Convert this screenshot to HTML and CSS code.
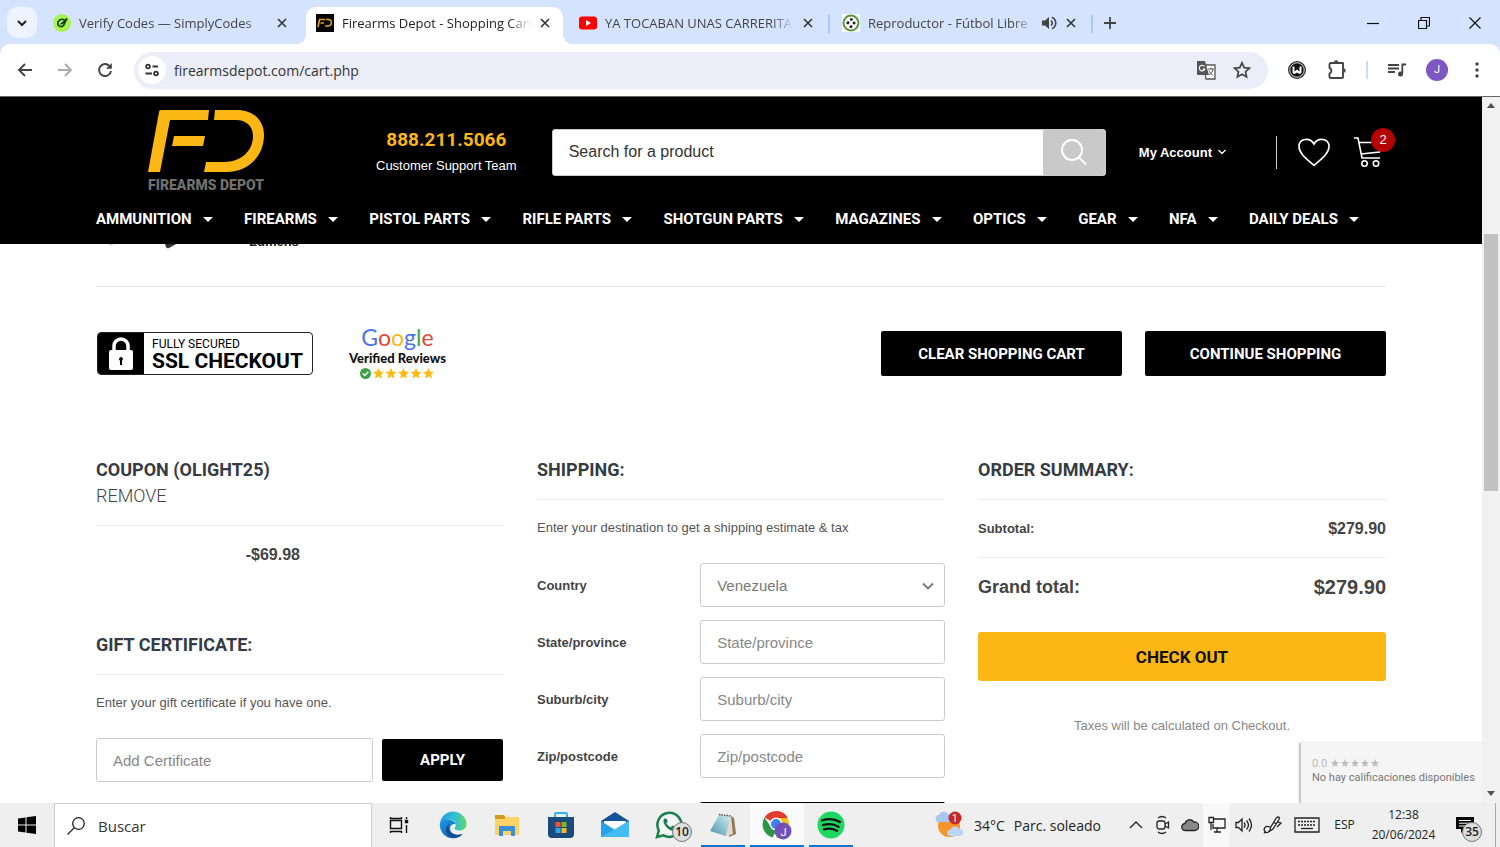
FILE: index.html
```html
<!DOCTYPE html>
<html lang="en">
<head>
    <meta charset="UTF-8">
    <meta name="viewport" content="width=device-width, initial-scale=1.0">
    <title>Firearms Depot - Shopping Cart</title>
    <link rel="stylesheet" href="styles.css">
</head>
<body>
    <!-- browser tabs -->
    <div class="tabbar">
        <button class="tab-search" aria-label="Search tabs">
            <svg width="12" height="12" viewBox="0 0 12 12"><path d="M2 4l4 4 4-4" fill="none" stroke="#222" stroke-width="2"/></svg>
        </button>
        <div class="tab">
            <svg class="favicon" viewBox="0 0 18 18"><circle cx="9" cy="9" r="9" fill="#a4f550"/><path d="M11.500 6C8 4 4.500 6.500 4.800 9.800c.4 3 4 3.700 5.700 1.700C12 9.500 11.500 8 14 4.500M7.500 9.500c1.500.5 2.500-.5 3-1.500L14 4.500" fill="none" stroke="#1d3b15" stroke-width="1.700"/></svg>
            <span class="tab-title">Verify Codes — SimplyCodes</span>
            <button class="tab-close" aria-label="Close tab"><svg width="12" height="12" viewBox="0 0 12 12"><path d="M2 2l8 8M10 2l-8 8"/></svg></button>
        </div>
        <div class="tab active">
            <svg class="favicon" viewBox="0 0 18 18"><path d="M0 0h18v18H0z" fill="#000"/><path d="M2 13L3.500 5.500H9M4.500 9H8M10 5.500h2.500c4 0 4 6.500-1 6.500H9" fill="none" stroke="#e3a21a" stroke-width="1.600"/></svg>
            <span class="tab-title">Firearms Depot - Shopping Cart</span>
            <button class="tab-close" aria-label="Close tab"><svg width="12" height="12" viewBox="0 0 12 12"><path d="M2 2l8 8M10 2l-8 8"/></svg></button>
        </div>
        <div class="tab divided">
            <svg class="favicon" viewBox="0 0 18 18"><rect y="2.500" width="18" height="13" rx="3" fill="#f00"/><path d="M7 6l5 3-5 3z" fill="#fff"/></svg>
            <span class="tab-title">YA TOCABAN UNAS CARRERITAS</span>
            <button class="tab-close" aria-label="Close tab"><svg width="12" height="12" viewBox="0 0 12 12"><path d="M2 2l8 8M10 2l-8 8"/></svg></button>
        </div>
        <div class="tab divided">
            <svg class="favicon" viewBox="0 0 18 18"><path d="M0 0h18v18H0z" fill="#fff"/><circle cx="9" cy="9" r="7.500" fill="#fff" stroke="#5b9a3c" stroke-width="2"/><path d="M8 4.500l2-.5 1 1.500-1.200 1.500L8 6.500zM4.500 8l2-1 1.200 1.800L6.500 10.500l-2-.5zM11 7.500l2.300.2.200 2-1.500 1L10.500 9.500zM7.500 12l2-1 1.200 1.500L9.500 14.200l-2-.4z" fill="#222"/></svg>
            <span class="tab-title">Reproductor - Fútbol Libre TV</span>
            <svg width="16" height="16" viewBox="0 0 16 16"><path d="M1 5.500h3L8 2v12l-4-3.500H1z" fill="#444"/><path d="M10 5.500c1.600 1.500 1.600 3.500 0 5M11 2.200c5 2.500 5 9 0 11.600" fill="none" stroke="#444" stroke-width="1.600"/></svg>
            <button class="tab-close" aria-label="Close tab"><svg width="12" height="12" viewBox="0 0 12 12"><path d="M2 2l8 8M10 2l-8 8"/></svg></button>
        </div>
        <button class="new-tab" aria-label="New tab"><svg width="12" height="12" viewBox="0 0 12 12"><path d="M6 0v12M0 6h12" stroke="#444" stroke-width="1.800"/></svg></button>
        <div class="window-controls">
            <button aria-label="Minimize"><svg width="12" height="12" viewBox="0 0 12 12"><path d="M0 6.500h12"/></svg></button>
            <button aria-label="Restore"><svg width="12" height="12" viewBox="0 0 12 12"><path d="M.5 3.500h8v8h-8zM3 3.500V.5h8.500V9H9"/></svg></button>
            <button aria-label="Close"><svg width="12" height="12" viewBox="0 0 12 12"><path d="M.5.5l11 11M11.500.5l-11 11"/></svg></button>
        </div>
    </div>

    <!-- address bar -->
    <div class="toolbar">
        <button class="tool" aria-label="Back"><svg width="16" height="16" viewBox="0 0 16 16"><path d="M15 8H2M8 2L2 8l6 6" fill="none" stroke="#444" stroke-width="1.900"/></svg></button>
        <button class="tool" aria-label="Forward"><svg width="16" height="16" viewBox="0 0 16 16"><path d="M1 8h13M8 2l6 6-6 6" fill="none" stroke="#aaa" stroke-width="1.800"/></svg></button>
        <button class="tool" aria-label="Reload"><svg width="16" height="16" viewBox="0 0 16 16"><path d="M14 9a6 6 0 1 1-1.600-5.200L14 5.500" fill="none" stroke="#444" stroke-width="1.900"/><path d="M14.800 1v5.800H9z" fill="#444"/></svg></button>
        <div class="omnibox">
            <button class="site-info" aria-label="Site information"><svg width="16" height="14" viewBox="0 0 16 14"><g fill="none" stroke="#333" stroke-width="1.800"><circle cx="4" cy="3.500" r="1.900"/><path d="M8.500 3.500H14M1.500 10.500H8"/><circle cx="12" cy="10.500" r="1.900"/></g></svg></button>
            <input class="url" type="text" aria-label="Address" value="firearmsdepot.com/cart.php">
            <button class="omni-btn" aria-label="Translate"><svg width="20" height="20" viewBox="0 0 20 20"><path d="M8 5h11v14H10z" fill="#fff" stroke="#555" stroke-width="1.300"/><path d="M1 1h8l4 14H2a1 1 0 0 1-1-1z" fill="#555"/><path d="M8.500 6.500A2.800 2.800 0 1 0 8.800 9H6.500" fill="none" stroke="#fff" stroke-width="1.200"/><path d="M12 9h6M15 7.500V9M17 9c-.5 3-2 4.500-4 6M13 10.500c1 2 2 3.500 4 4.500" fill="none" stroke="#555"/></svg></button>
            <button class="omni-btn" aria-label="Bookmark"><svg width="18" height="18" viewBox="0 0 18 18"><path d="M9 1.800l2.200 4.800 5.200.6-3.900 3.500 1.100 5.200L9 13.300l-4.600 2.600 1.100-5.200-3.900-3.500 5.200-.6z" fill="none" stroke="#444" stroke-width="1.700"/></svg></button>
        </div>
        <button class="tool ext" aria-label="Extension"><svg width="18" height="18" viewBox="0 0 18 18"><circle cx="9" cy="9" r="9" fill="#333"/><circle cx="9" cy="9" r="7.200" fill="#111" stroke="#fff" stroke-width=".8"/><path d="M4.500 5.500h2v5L9 8.500l2.500 2v-5h2v5.500c0 2-2.500 2.500-4.500.5-2 2-4.500 1.500-4.500-.5z" fill="#fff"/></svg></button>
        <button class="tool" aria-label="Extensions"><svg width="20" height="20" viewBox="0 0 20 20"><path d="M2.500 4.500q0-1.500 1.500-1.500h12v14q0 1-1 1H3.500q-1 0-1-1v-3.500c2.500-.8 2.500-4.700 0-5.500z" fill="none" stroke="#444" stroke-width="1.900" stroke-linejoin="round"/><path d="M7 2.500a2.200 2.200 0 0 1 4.400 0zM16.500 8.300a2.200 2.200 0 0 1 0 4.400z" fill="#444"/></svg></button>
        <span class="tool-sep"></span>
        <button class="tool" aria-label="Media"><svg width="18" height="16" viewBox="0 0 18 16"><path d="M0 3h11M0 6.500h11M0 10h7M14.300 11.500V2.500H18" fill="none" stroke="#444" stroke-width="1.800"/><circle cx="12.500" cy="12" r="2.500" fill="#444"/></svg></button>
        <button class="tool" aria-label="Profile"><span class="avatar">J</span></button>
        <button class="tool" aria-label="Menu"><svg width="4" height="16" viewBox="0 0 4 16" fill="#444"><circle cx="2" cy="2" r="1.700"/><circle cx="2" cy="8" r="1.700"/><circle cx="2" cy="14" r="1.700"/></svg></button>
    </div>

    <div class="viewport">
        <div class="page">
            <header class="site-header">
                <div class="header-row">
                    <a class="logo" href="#">
                        <svg width="116" height="62" viewBox="0 0 116 62" fill="#fdb715"><path d="M13 0h48l-1 10H22L12 62H0L11 2q0-2 2-2zM26 26h31l-2 10H24zM67 0h22c17 0 27 11 27 25 0 22-17 37-37 37H56l2-10h18c17 0 29-11 29-26 0-10-7-16-17-16H66z"/></svg>
                        <span>FIREARMS DEPOT</span>
                    </a>
                    <div class="support">
                        <a href="#" class="phone">888.211.5066</a>
                        <span>Customer Support Team</span>
                    </div>
                    <form class="search">
                        <input type="text" placeholder="Search for a product" aria-label="Search for a product">
                        <button type="button" aria-label="Search"><svg width="28" height="28" viewBox="0 0 28 28" fill="none" stroke="#fff" stroke-width="2"><circle cx="12" cy="12" r="10"/><path d="M19 19.500l7 7"/></svg></button>
                    </form>
                    <a href="#" class="account">My Account <svg width="8" height="6" viewBox="0 0 8 6"><path d="M.5 1L4 4.500 7.500 1" fill="none" stroke="#fff" stroke-width="1.300"/></svg></a>
                    <span class="header-sep"></span>
                    <a href="#" class="wish" aria-label="Wish list"><svg width="34" height="30" viewBox="0 0 34 30"><path d="M17 28.500C11 23 2 17 2 9.500 2 1 13 0 17 7c4-7 15-6 15 2.500 0 7.500-9 13.500-15 19z" fill="none" stroke="#fff" stroke-width="1.600"/></svg></a>
                    <a href="#" class="cart" aria-label="Cart"><svg width="30" height="32" viewBox="0 0 30 32" fill="none" stroke="#fff" stroke-width="1.600"><path d="M1 2h4l4 20h18M6 6.500h22l-1.500 9.500L8 18"/><circle cx="11.500" cy="27.500" r="2.700"/><circle cx="23" cy="27.500" r="2.700"/></svg><span class="count">2</span></a>
                </div>
                <nav class="menu">
                    <a href="#">AMMUNITION</a>
                    <a href="#">FIREARMS</a>
                    <a href="#">PISTOL PARTS</a>
                    <a href="#">RIFLE PARTS</a>
                    <a href="#">SHOTGUN PARTS</a>
                    <a href="#">MAGAZINES</a>
                    <a href="#">OPTICS</a>
                    <a href="#">GEAR</a>
                    <a href="#">NFA</a>
                    <a href="#">DAILY DEALS</a>
                </nav>
            </header>

            <main class="content">
                <!-- last cart item, scrolled under the header -->
                <div class="cart-item">
                    <svg width="90" height="16" viewBox="0 0 90 16"><path d="M66 4h24L72 14q-2 1-3-1z" fill="#333"/><path d="M8 8q6 5 12 0z" fill="#777"/></svg>
                    <span>Lumens</span>
                </div>

                <div class="cart-actions">
                    <div class="ssl">
                        <span class="ssl-lock"><svg width="26" height="34" viewBox="0 0 26 34"><path d="M6 14V9a7 7 0 0 1 14 0v5" fill="none" stroke="#fff" stroke-width="3.500"/><rect x="1" y="13" width="24" height="20" rx="2" fill="#fff"/><path d="M13 20a2 2 0 0 1 1 3.700V28h-2v-4.300a2 2 0 0 1 1-3.700z" fill="#000"/></svg></span>
                        <span class="ssl-text"><span>FULLY SECURED</span><b>SSL CHECKOUT</b></span>
                    </div>
                    <div class="google">
                        <div class="google-name"><span class="blue">G</span><span class="red">o</span><span class="yellow">o</span><span class="blue">g</span><span class="green">l</span><span class="red">e</span></div>
                        <b>Verified Reviews</b>
                        <div class="google-stars">
                            <svg width="11" height="11" viewBox="0 0 11 11"><circle cx="5.500" cy="5.500" r="5.500" fill="#3fa047"/><path d="M2.800 5.500l2 2 3.500-3.800" fill="none" stroke="#fff" stroke-width="1.400"/></svg>
                            <svg width="61" height="11" viewBox="0 0 61 11" fill="#fbbc16"><defs><path id="star" d="M5.500 0l1.600 3.600 3.900.4-2.900 2.600.8 3.900-3.400-2-3.400 2 .8-3.900L0 4l3.900-.4z"/></defs><use href="#star"/><use href="#star" x="12.500"/><use href="#star" x="25"/><use href="#star" x="37.500"/><use href="#star" x="50"/></svg>
                        </div>
                    </div>
                    <button class="btn push">CLEAR SHOPPING CART</button>
                    <button class="btn">CONTINUE SHOPPING</button>
                </div>

                <div class="columns">
                    <section>
                        <div class="section-head">
                            <h2>COUPON (OLIGHT25)</h2>
                            <a href="#" class="remove">REMOVE</a>
                        </div>
                        <p class="discount">-$69.98</p>
                        <div class="section-head">
                            <h2>GIFT CERTIFICATE:</h2>
                        </div>
                        <p class="note">Enter your gift certificate if you have one.</p>
                        <form class="gift">
                            <input class="field" type="text" placeholder="Add Certificate" aria-label="Add Certificate">
                            <button type="button" class="btn">APPLY</button>
                        </form>
                    </section>

                    <section>
                        <div class="section-head">
                            <h2>SHIPPING:</h2>
                        </div>
                        <p class="note">Enter your destination to get a shipping estimate &amp; tax</p>
                        <form class="shipping">
                            <label for="country">Country</label>
                            <div class="select">
                                <select class="field" id="country"><option>Venezuela</option></select>
                                <svg width="12" height="8" viewBox="0 0 12 8"><path d="M1 1.500l5 5 5-5" fill="none" stroke="#777" stroke-width="1.800"/></svg>
                            </div>
                            <label for="state">State/province</label>
                            <input class="field" id="state" type="text" placeholder="State/province">
                            <label for="city">Suburb/city</label>
                            <input class="field" id="city" type="text" placeholder="Suburb/city">
                            <label for="zip">Zip/postcode</label>
                            <input class="field" id="zip" type="text" placeholder="Zip/postcode">
                            <button type="button" class="btn estimate" aria-label="Estimate"></button>
                        </form>
                    </section>

                    <section>
                        <div class="section-head">
                            <h2>ORDER SUMMARY:</h2>
                        </div>
                        <div class="total"><span>Subtotal:</span><b>$279.90</b></div>
                        <div class="total grand"><span>Grand total:</span><b>$279.90</b></div>
                        <button class="checkout">CHECK OUT</button>
                        <p class="taxes">Taxes will be calculated on Checkout.</p>
                    </section>
                </div>
            </main>

            <div class="rating">
                <div class="rating-score">0.0 <span>★★★★★</span></div>
                <div>No hay calificaciones disponibles</div>
            </div>
        </div>

        <div class="scrollbar">
            <svg width="10" height="6" viewBox="0 0 10 6"><path d="M5 0l4 5H1z" fill="#505050"/></svg>
            <div class="track"><div class="thumb"></div></div>
            <svg width="10" height="6" viewBox="0 0 10 6"><path d="M5 5l4-5H1z" fill="#505050"/></svg>
        </div>
    </div>

    <!-- windows taskbar -->
    <div class="taskbar">
        <button class="task" aria-label="Inicio"><svg width="18" height="18" viewBox="0 0 18 18"><path d="M0 2.600L7.500 1.500v7H0zM8.500 1.300L18 0v8.500H8.500zM0 9.500h7.500v7L0 15.400zM8.500 9.500H18V18l-9.500-1.300z"/></svg></button>
        <div class="task-search">
            <svg width="18" height="18" viewBox="0 0 18 18" fill="none" stroke="#222" stroke-width="1.300"><circle cx="11.500" cy="6.500" r="5.800"/><path d="M7.500 10.500L.5 17.500"/></svg>
            <input type="text" placeholder="Buscar" aria-label="Buscar">
        </div>
        <button class="task" aria-label="Vista de tareas"><svg width="20" height="18" viewBox="0 0 20 18" fill="none" stroke="#111" stroke-width="1.400"><path d="M1.500 4.500h11v8h-11zM1.500 1v1.500h11V1M1.500 17v-1.500h11V17M17.500 1v2M17.500 9v8"/><path d="M16.500 4.500h2v2h-2z" fill="#111"/></svg></button>
        <button class="task" aria-label="Edge"><svg width="28" height="28" viewBox="0 0 28 28"><defs><linearGradient id="edgeTop" x1="0" x2="1"><stop offset="0" stop-color="#1b9de2"/><stop offset=".6" stop-color="#35c1cf"/><stop offset="1" stop-color="#64d95c"/></linearGradient><linearGradient id="edgeLow" x1="0" y1="0" x2="1" y2="1"><stop offset="0" stop-color="#1e9ce8"/><stop offset="1" stop-color="#0c4f9d"/></linearGradient></defs><path d="M1 14C1 6 7 .5 14 .5S27.500 6 27.500 13c0 4-3 6.500-7 6.500-3 0-5-1-5-2s1.500-1.500 1.500-4c0-3-3-5-7-5-5 0-9 3-9 5.500z" fill="url(#edgeTop)"/><path d="M.7 13C2 9 6 8 10 8.500c4 .5 6.500 2.500 7 5-2-1.500-6 0-6 4 0 4.500 5 7.500 12.500 5.500C17 31 1 28 .7 13z" fill="url(#edgeLow)"/><path d="M10 13c-2 8 4 13 13.500 10-4 5-12 5-15.500 0-2-3-1-8 2-10z" fill="#124d91"/></svg></button>
        <button class="task" aria-label="Explorador"><svg width="26" height="24" viewBox="0 0 26 24"><path d="M1 2h9l2 3h12v5H1z" fill="#d39b1b"/><path d="M1 6h9l2-2h13v18H1z" fill="#fcd366"/><path d="M5 14q0-1 1-1h14q1 0 1 1v9h-4v-5H9v5H5z" fill="#3a8fd8"/></svg></button>
        <button class="task" aria-label="Store"><svg width="26" height="28" viewBox="0 0 26 28"><path d="M7 7V3q0-1 1-1h10q1 0 1 1v4" fill="none" stroke="#2fb3ef" stroke-width="2"/><path d="M0 6h26v17q0 4-4 4H4q-4 0-4-4z" fill="#1c4a7c"/><path d="M7.500 11h5v5h-5z" fill="#f2522d"/><path d="M13.500 11h5v5h-5z" fill="#7fba1c"/><path d="M7.500 17h5v5h-5z" fill="#2aa5ed"/><path d="M13.500 17h5v5h-5z" fill="#fdb91a"/></svg></button>
        <button class="task" aria-label="Correo"><svg width="28" height="26" viewBox="0 0 28 26"><path d="M0 9L14 0l14 9v3H0z" fill="#14539b"/><path d="M3 9h22v8L14 21 3 16z" fill="#fff"/><path d="M0 9l14 9L28 9v16H0z" fill="#2aa0e8"/><path d="M0 25L28 9v16z" fill="#45bdf3"/></svg></button>
        <button class="task" aria-label="WhatsApp"><svg width="28" height="28" viewBox="0 0 28 28"><path d="M2 26l1.800-6.500A12 12 0 1 1 8.500 24.300z" fill="#f5f5f5" stroke="#17804f" stroke-width="2.500"/><path d="M9.500 7.500c-4 4 5 14 10 12 2-1 1.800-3 1.200-3.500L17.500 14.500l-1.700 1.700c-2-.6-3.500-2.200-4.300-4.200l1.300-1.500L11.500 7.500z" fill="#17804f"/></svg><span class="badge">10</span></button>
        <button class="task open" aria-label="Bloc de notas"><svg width="28" height="26" viewBox="0 0 28 26"><defs><linearGradient id="pad" x1="1" y1="0" x2="0" y2="1"><stop offset="0" stop-color="#d8eef2"/><stop offset="1" stop-color="#4596ad"/></linearGradient></defs><path d="M22 4l3 2 2 16-7 3z" fill="#8f7657"/><path d="M10 3l12 1-5 20-16-5z" fill="url(#pad)"/><path d="M22 4l2 18-7 2z" fill="#e4d8c4"/><path d="M10 2.500l12 1.500" stroke="#555" stroke-width="1.500" stroke-dasharray="1.500 1"/></svg></button>
        <button class="task open current" aria-label="Chrome"><svg width="30" height="30" viewBox="0 0 30 30"><path d="M14 14L2.500 7.500A13.500 13.500 0 0 1 25.700 7.500z" fill="#e33b2e"/><path d="M14 1A13 13 0 0 1 25.500 8H14z" fill="#e33b2e"/><path d="M14 8h11.500A13.500 13.500 0 0 1 14 28l5.500-11z" fill="#fbc116"/><path d="M2.500 7.500L9 17l5 4-3.500 6.500A13.500 13.500 0 0 1 2.500 7.500z" fill="#2c9647"/><circle cx="14" cy="14" r="6.500" fill="#fff"/><circle cx="14" cy="14" r="5" fill="#3b82f0"/><circle cx="21" cy="21" r="8.500" fill="#7350b5"/><text x="18.500" y="25.500" class="mini-j">J</text></svg></button>
        <button class="task open" aria-label="Spotify"><svg width="28" height="28" viewBox="0 0 28 28"><circle cx="14" cy="14" r="13.500" fill="#1ed760"/><path d="M5 9.500c6-2 13-1.500 18 1.500M6 14c5.500-1.500 11-1 15.500 1.800M7 18.300c4.500-1.200 9-.8 13 1.500" fill="none" stroke="#111" stroke-width="2.300" stroke-linecap="round"/></svg></button>

        <div class="tray">
            <div class="weather">
                <svg width="30" height="30" viewBox="0 0 30 30"><circle cx="14" cy="16" r="11" fill="#f5952b"/><path d="M4 12a3.500 3.500 0 0 1 0-7 5 5 0 0 1 9-1 4 4 0 0 1 1 8z" fill="#a9c7f0"/><path d="M15 26a3 3 0 0 1 0-6 5 5 0 0 1 9-1 3.500 3.500 0 0 1 1 7z" fill="#bcd4f5"/><circle cx="20" cy="8" r="6.500" fill="#c62a22"/><text x="17" y="12" class="mini-n">1</text></svg>
                <span>34°C</span>
                <span>Parc. soleado</span>
            </div>
            <span class="tray-icon"><svg width="14" height="8" viewBox="0 0 14 8"><path d="M1 7l6-6 6 6"/></svg></span>
            <span class="tray-icon"><svg width="14" height="20" viewBox="0 0 14 20"><rect x="1" y="6" width="8" height="8" rx="2"/><path d="M9 9l3.500-2v6L9 11M2 3q4-3 8 0M2 17q4 3 8 0"/></svg></span>
            <span class="tray-icon"><svg width="18" height="14" viewBox="0 0 18 14"><path d="M4.500 12.500a3.500 3.500 0 0 1-.5-7 5 5 0 0 1 9-1.500 4 4 0 0 1 1 8.500z" fill="#888"/></svg></span>
            <span class="tray-icon lit"><svg width="18" height="18" viewBox="0 0 18 18"><path d="M6 3h11v9H5V8M9 12v4M6 16h7M1 1.500h4.500v5H1zM3 6.500V14"/></svg></span>
            <span class="tray-icon"><svg width="18" height="16" viewBox="0 0 18 16"><path d="M1 5.500h2.500L7 2v12l-3.500-3.500H1zM9 5.500q2 2.500 0 5M11.500 3.500q4 4.500 0 9M14 1.500q5 6.500 0 13"/></svg></span>
            <span class="tray-icon wide"><svg width="20" height="20" viewBox="0 0 20 20"><path d="M16 2q2 0 1 2.500L11 14l-3 2 .5-3.500L14 3.500q1-1.500 2-1.500zM12 7.500l2.500 1.500M16 7l3 1-4 4M8 12c-5-2-7 2-5 4.500 1.500 2 4 1 4-1M3 17l-1 1.500"/></svg></span>
            <span class="tray-icon keyboard"><svg width="26" height="16" viewBox="0 0 26 16"><path d="M1 1h24v14H1z"/><path d="M4 4.500h18M4 8h18" stroke-dasharray="2 1"/><path d="M7 11.500h12"/></svg></span>
            <span class="lang">ESP</span>
            <div class="clock"><span>12:38</span><span>20/06/2024</span></div>
            <button class="notify" aria-label="Notificaciones"><svg width="18" height="18" viewBox="0 0 18 18"><path d="M0 1h18v12H9l-4 4v-4H0z" fill="#000"/><path d="M3 4.500h12M3 7.200h12M3 10h9" stroke="#fff"/></svg><span class="badge">35</span></button>
            <span class="show-desktop"></span>
        </div>
    </div>
</body>
</html>
```

FILE: styles.css
```css
* {
    box-sizing: border-box;
}
body {
    margin: 0;
    height: 100vh;
    display: flex;
    flex-direction: column;
    background: #d5e3ff;
    font-family: "Open Sans", "Noto Sans", sans-serif;
    color: #333;
    overflow: hidden;
}
button {
    border: none;
    padding: 0;
    background: none;
    font: inherit;
    color: inherit;
    cursor: pointer;
}
input, select {
    font: inherit;
    min-width: 0;
}
a {
    color: inherit;
    text-decoration: none;
}
h2, p {
    margin: 0;
}
svg {
    flex: none;
    display: block;
}

/* tabs */
.tabbar {
    height: 44px;
    flex: none;
    display: flex;
    gap: 6px;
    padding-left: 7px;
    font-size: 13px;
}
.tab-search {
    width: 30px;
    height: 31px;
    margin-top: 7px;
    border-radius: 10px;
    background: #edf3ff;
    display: flex;
    align-items: center;
    justify-content: center;
}
.tab {
    position: relative;
    width: 257px;
    height: 37px;
    margin-top: 7px;
    padding: 0 12px 5px 10px;
    display: flex;
    align-items: center;
    gap: 8px;
    color: #444;
}
.tab.active {
    background: #fff;
    border-radius: 10px 10px 0 0;
    color: #222;
}
.tab.active::before, .tab.active::after {
    content: "";
    position: absolute;
    bottom: 0;
    width: 10px;
    height: 10px;
}
.tab.active::before {
    left: -10px;
    background: radial-gradient(circle at 0 0, transparent 10px, #fff 10px);
}
.tab.active::after {
    right: -10px;
    background: radial-gradient(circle at 100% 0, transparent 10px, #fff 10px);
}
.tab.divided::after {
    content: "";
    position: absolute;
    right: -4px;
    top: 8px;
    width: 2px;
    height: 18px;
    background: #a8c7fa;
}
.favicon {
    width: 18px;
    height: 18px;
}
.tab-title {
    flex: 1;
    overflow: hidden;
    white-space: nowrap;
    mask-image: linear-gradient(to right, #000 88%, transparent);
}
.tab-close {
    stroke: #333;
    stroke-width: 1.6;
}
.new-tab {
    width: 30px;
    height: 46px;
    display: flex;
    align-items: center;
    justify-content: center;
}
.window-controls {
    display: flex;
    margin-left: auto;
}
.window-controls button {
    width: 51px;
    height: 45px;
    display: flex;
    align-items: center;
    justify-content: center;
    fill: none;
    stroke: #111;
    stroke-width: 1.2;
}

/* toolbar */
.toolbar {
    height: 52px;
    flex: none;
    display: flex;
    align-items: center;
    padding: 0 3px 0 5px;
    background: #fff;
    border-radius: 10px 10px 0 0;
}
.tool {
    width: 40px;
    height: 36px;
    display: flex;
    align-items: center;
    justify-content: center;
}
.tool.ext {
    margin-left: 9px;
}
.tool-sep {
    width: 2px;
    height: 18px;
    margin: 0 9px;
    background: #c9dcfb;
}
.omnibox {
    flex: 1;
    height: 37px;
    margin-left: 9px;
    padding: 0 8px 0 4px;
    border-radius: 19px;
    background: #ebeef8;
    display: flex;
    align-items: center;
}
.site-info {
    width: 28px;
    height: 28px;
    border-radius: 50%;
    background: #fff;
    display: flex;
    align-items: center;
    justify-content: center;
}
.url {
    flex: 1;
    margin-left: 8px;
    padding: 0;
    border: none;
    background: none;
    font-size: 14px;
    color: #333;
}
.omni-btn {
    width: 36px;
    height: 28px;
    display: flex;
    align-items: center;
    justify-content: center;
}
.avatar {
    width: 22px;
    height: 22px;
    border-radius: 50%;
    background: #7e57c2;
    color: #fff;
    font: 11px/22px Roboto, sans-serif;
    text-align: center;
}

/* page */
.viewport {
    flex: 1;
    min-height: 0;
    display: flex;
    border-top: 1px solid #666;
}
.page {
    position: relative;
    flex: 1;
    overflow: hidden;
    background: #fff;
    font-family: "Liberation Sans", Arial, sans-serif;
    font-size: 13px;
    color: #555;
}
.site-header {
    position: relative;
    z-index: 1;
    padding: 13px 96px 0;
    background: #000;
    color: #fff;
}
.header-row {
    height: 84px;
    display: flex;
    align-items: center;
}
.logo {
    margin: 0 112px 0 52px;
    display: flex;
    flex-direction: column;
    align-items: center;
    gap: 4px;
    font: 900 14px/18px Roboto, sans-serif;
    color: #6f6f6f;
}
.support {
    margin-right: 35px;
    display: flex;
    flex-direction: column;
    align-items: center;
    gap: 4px;
    line-height: 20px;
    white-space: nowrap;
}
.phone {
    font: 700 19px/24px Roboto, sans-serif;
    color: #fdb715;
}
.search {
    flex: 1;
    height: 47px;
    display: flex;
    border: 1px solid #ccc;
    border-radius: 3px;
    background: #fff;
    overflow: hidden;
}
.search input {
    flex: 1;
    border: none;
    padding: 0 16px;
    font-size: 16px;
}
.search input::placeholder {
    color: #333;
    opacity: 1;
}
.search button {
    width: 62px;
    background: #c9c9c9;
    display: flex;
    align-items: center;
    justify-content: center;
}
.account {
    margin-left: 33px;
    display: flex;
    align-items: center;
    gap: 6px;
    font-weight: bold;
    white-space: nowrap;
}
.header-sep {
    width: 1px;
    height: 33px;
    margin: 0 20px 0 50px;
    background: #ccc;
}
.wish {
    margin-right: 22px;
}
.cart {
    position: relative;
    margin-right: 3px;
}
.count {
    position: absolute;
    top: -8px;
    left: 18px;
    width: 24px;
    height: 24px;
    border-radius: 50%;
    background: #b50000;
    font-size: 13px;
    line-height: 24px;
    text-align: center;
}
.menu {
    display: flex;
    justify-content: space-between;
    padding-right: 27px;
    font: 700 15px/50px Roboto, sans-serif;
    white-space: nowrap;
}
.menu a::after {
    content: "";
    display: inline-block;
    margin: 0 0 2px 11px;
    vertical-align: middle;
    border: 5px solid transparent;
    border-top-color: #fff;
    border-bottom: none;
}

.content {
    padding: 0 96px;
}
.cart-item {
    height: 53px;
    margin-top: -10px;
    padding-left: 1px;
    display: flex;
    gap: 62px;
    line-height: 16px;
    font-weight: bold;
    color: #222;
    border-bottom: 1px solid #e2e2e2;
}
.cart-actions {
    display: flex;
    align-items: center;
    height: 133px;
}
.btn {
    width: 241px;
    height: 45px;
    border-radius: 2px;
    background: #000;
    color: #fff;
    font: 700 15px Roboto, sans-serif;
}
.push {
    margin: 0 23px 0 auto;
}
.ssl {
    display: flex;
    width: 216px;
    height: 43px;
    margin-left: 1px;
    border: 1px solid #222;
    border-radius: 4px;
    overflow: hidden;
    font-family: Roboto, sans-serif;
    color: #000;
}
.ssl-lock {
    width: 46px;
    background: #000;
    display: flex;
    align-items: center;
    justify-content: center;
}
.ssl-text {
    display: flex;
    flex-direction: column;
    justify-content: center;
    padding-left: 8px;
    font-size: 12px;
    line-height: 14px;
}
.ssl-text b {
    font-size: 21px;
    line-height: 20px;
}
.google {
    margin-left: 36px;
    padding-bottom: 4px;
    display: flex;
    flex-direction: column;
    align-items: center;
    font: 700 13px/16px Lato, sans-serif;
    color: #111;
}
.google-name {
    font-size: 23px;
    line-height: 26px;
    font-weight: 400;
}
.google-stars {
    display: flex;
    gap: 2px;
    margin-top: 2px;
}
.blue { color: #4a74e8; }
.red { color: #e2483a; }
.yellow { color: #f5b916; }
.green { color: #3fa653; }

.columns {
    display: grid;
    grid-template-columns: repeat(3, 1fr);
    gap: 33px;
    padding-top: 37px;
}
.section-head {
    padding-bottom: 16px;
    border-bottom: 1px solid #ebebeb;
}
h2 {
    font: 700 18px/26px Roboto, sans-serif;
    color: #363c44;
}
.remove {
    display: block;
    font: 300 18px/26px Roboto, sans-serif;
    color: #444;
}
.discount {
    width: 50%;
    margin: 20px 0 68px;
    text-align: right;
    font-size: 16px;
    line-height: 18px;
    font-weight: bold;
    color: #444;
}
.note {
    padding: 20px 0 27px;
    line-height: 16px;
}
.gift {
    display: flex;
    align-items: center;
    gap: 9px;
}
.gift .field {
    flex: 1;
}
.gift .btn {
    width: 121px;
    height: 42px;
    margin-right: 1px;
}
.field {
    width: 100%;
    height: 44px;
    padding: 0 16px;
    border: 1px solid #ccc;
    border-radius: 3px;
    background: #fff;
    font-size: 15px;
    color: #777;
}
.field::placeholder {
    color: #888;
    opacity: 1;
}
.shipping {
    display: grid;
    grid-template-columns: 2fr 3fr;
    row-gap: 13px;
    align-items: center;
}
.shipping label {
    font-weight: bold;
    color: #444;
}
.select {
    position: relative;
}
.select select {
    appearance: none;
}
.select svg {
    position: absolute;
    right: 11px;
    top: 19px;
    pointer-events: none;
}
.estimate {
    grid-column: 2;
    width: 100%;
    margin-top: 11px;
}
.total {
    display: flex;
    justify-content: space-between;
    align-items: center;
    height: 58px;
    border-bottom: 1px solid #ebebeb;
    font-weight: bold;
    color: #444;
}
.total b {
    font-size: 16px;
}
.grand {
    border-bottom: none;
    font-size: 18px;
}
.grand b {
    font-size: 20px;
}
.checkout {
    width: 100%;
    height: 49px;
    margin-top: 16px;
    border-radius: 3px;
    background: #fdb715;
    font: 700 17px Roboto, sans-serif;
    color: #111;
}
.taxes {
    margin-top: 37px;
    line-height: 16px;
    text-align: center;
    color: #888;
}
.rating {
    position: absolute;
    right: 0;
    bottom: 0;
    width: 183px;
    height: 60px;
    padding: 14px 0 0 11px;
    border-left: 2px solid #ccc;
    background: #f5f5f5;
    box-shadow: 0 0 2px #ccc;
    font: 11px/14px Roboto, sans-serif;
    color: #777;
    white-space: nowrap;
}
.rating-score {
    color: #bbb;
}

.scrollbar {
    width: 18px;
    padding: 6px 0;
    background: #f1f1f1;
    display: flex;
    flex-direction: column;
    align-items: center;
}
.track {
    flex: 1;
    width: 14px;
    display: flex;
    flex-direction: column;
    padding: 125px 0 300px;
}
.thumb {
    flex: 1;
    background: #c1c1c1;
}

/* taskbar */
.taskbar {
    position: relative;
    height: 44px;
    flex: none;
    display: flex;
    background: #efefef;
    color: #222;
    font-size: 14px;
}
.task {
    position: relative;
    width: 54px;
    display: flex;
    align-items: center;
    justify-content: center;
}
.task.open::after {
    content: "";
    position: absolute;
    left: 5px;
    right: 5px;
    bottom: 0;
    height: 2px;
    background: #0a74d1;
}
.task.current {
    background: #fafafa;
}
.task.current::after {
    left: 0;
    right: 0;
}
.task-search {
    width: 318px;
    padding-left: 12px;
    border: 1px solid #ccc;
    border-bottom: none;
    background: #fff;
    display: flex;
    align-items: center;
    gap: 13px;
}
.task-search input {
    flex: 1;
    padding: 0;
    border: none;
    font-size: 15px;
}
.task-search input::placeholder {
    color: #333;
    opacity: 1;
}
.badge {
    position: absolute;
    left: 30px;
    top: 19px;
    width: 20px;
    height: 20px;
    border: 1px solid #777;
    border-radius: 50%;
    background: #ddd;
    font-size: 12px;
    line-height: 18px;
    font-weight: 600;
    text-align: center;
}
.mini-j {
    font: 11px Roboto, sans-serif;
    fill: #fff;
}
.mini-n {
    font: 10px Roboto, sans-serif;
    fill: #fff;
}
.tray {
    display: flex;
    margin-left: auto;
    white-space: nowrap;
}
.weather {
    display: flex;
    align-items: center;
    gap: 9px;
    margin-right: 21px;
}
.tray-icon {
    width: 27px;
    display: flex;
    align-items: center;
    justify-content: center;
    fill: none;
    stroke: #222;
    stroke-width: 1.3;
}
.tray-icon.lit {
    background: #f8f8f8;
}
.tray-icon.wide {
    width: 30px;
}
.tray-icon.keyboard {
    width: 40px;
}
.lang {
    width: 35px;
    font-size: 12px;
    line-height: 44px;
    text-align: center;
}
.clock {
    width: 83px;
    padding-top: 2px;
    display: flex;
    flex-direction: column;
    align-items: center;
    font-size: 12px;
    line-height: 20px;
}
.notify {
    position: relative;
    width: 50px;
    display: flex;
    align-items: center;
    padding-left: 11px;
}
.notify .badge {
    left: 17px;
}
.show-desktop {
    width: 5px;
    border-left: 1px solid #aaa;
}
```
